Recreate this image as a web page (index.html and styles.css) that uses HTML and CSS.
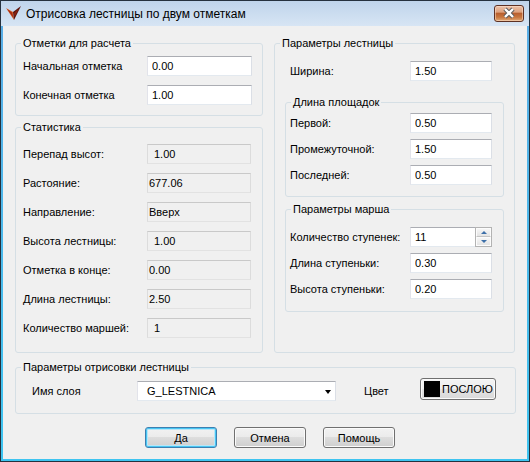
FILE: index.html
```html
<!DOCTYPE html>
<html>
    <head>
        <meta charset="utf-8">
        <link rel="stylesheet" href="styles.css">
    </head>
    <body>
        <div class="window">
            <div class="titlebar">
                <svg class="app-icon" viewBox="0 0 16 16">
                    <polygon points="0,2 7,6 8,14" fill="#d8602a"/>
                    <polygon points="1,3 6,6.5 7.5,12" fill="#a32a12"/>
                    <polygon points="7,6 15,0 8,14" fill="#5a140c"/>
                    <polygon points="8,7 13,2.5 8.5,11" fill="#8a2212"/>
                </svg>
                <span class="title">Отрисовка лестницы по двум отметкам</span>
                <div class="close-btn">
                    <svg viewBox="0 0 30 17" width="30" height="17">
                        <path d="M11 4 L19 12 M19 4 L11 12" stroke="#5a5a5a" stroke-width="4.4"/>
                        <path d="M11 4 L19 12 M19 4 L11 12" stroke="#fff" stroke-width="2.4"/>
                    </svg>
                </div>
            </div>

            <div class="client">
                <div class="top">
                    <div class="col-left">
                        <fieldset class="group g-marks">
                            <legend>Отметки для расчета</legend>
                            <div class="row">
                                <label class="lbl-left">Начальная отметка</label>
                                <input class="edit w-left" type="text" value="0.00">
                            </div>
                            <div class="row">
                                <label class="lbl-left">Конечная отметка</label>
                                <input class="edit w-left" type="text" value="1.00">
                            </div>
                        </fieldset>

                        <fieldset class="group g-stats">
                            <legend>Статистика</legend>
                            <div class="row">
                                <label class="lbl-left">Перепад высот:</label>
                                <div class="static shift">1.00</div>
                            </div>
                            <div class="row">
                                <label class="lbl-left">Растояние:</label>
                                <div class="static">677.06</div>
                            </div>
                            <div class="row">
                                <label class="lbl-left">Направление:</label>
                                <div class="static">Вверх</div>
                            </div>
                            <div class="row">
                                <label class="lbl-left">Высота лестницы:</label>
                                <div class="static shift">1.00</div>
                            </div>
                            <div class="row">
                                <label class="lbl-left">Отметка в конце:</label>
                                <div class="static">0.00</div>
                            </div>
                            <div class="row">
                                <label class="lbl-left">Длина лестницы:</label>
                                <div class="static">2.50</div>
                            </div>
                            <div class="row">
                                <label class="lbl-left">Количество маршей:</label>
                                <div class="static shift">1</div>
                            </div>
                        </fieldset>
                    </div>

                    <fieldset class="group g-params">
                        <legend>Параметры лестницы</legend>
                        <div class="row width-row">
                            <label class="lbl-right">Ширина:</label>
                            <input class="edit w-right" type="text" value="1.50">
                        </div>

                        <fieldset class="group sub g-pads">
                            <legend>Длина площадок</legend>
                            <div class="row">
                                <label class="lbl-right">Первой:</label>
                                <input class="edit w-right" type="text" value="0.50">
                            </div>
                            <div class="row">
                                <label class="lbl-right">Промежуточной:</label>
                                <input class="edit w-right" type="text" value="1.50">
                            </div>
                            <div class="row">
                                <label class="lbl-right">Последней:</label>
                                <input class="edit w-right" type="text" value="0.50">
                            </div>
                        </fieldset>

                        <fieldset class="group sub g-march">
                            <legend>Параметры марша</legend>
                            <div class="row">
                                <label class="lbl-right">Количество ступенек:</label>
                                <div class="edit w-right spin">
                                    <input class="bare" type="text" value="11">
                                    <div class="spin-btns">
                                        <span class="spin-up"><i></i></span>
                                        <span class="spin-down"><i></i></span>
                                    </div>
                                </div>
                            </div>
                            <div class="row">
                                <label class="lbl-right">Длина ступеньки:</label>
                                <input class="edit w-right" type="text" value="0.30">
                            </div>
                            <div class="row">
                                <label class="lbl-right">Высота ступеньки:</label>
                                <input class="edit w-right" type="text" value="0.20">
                            </div>
                        </fieldset>
                    </fieldset>
                </div>

                <fieldset class="group g-draw">
                    <legend>Параметры отрисовки лестницы</legend>
                    <div class="row">
                        <label class="lbl-layer">Имя слоя</label>
                        <div class="combo">
                            <span>G_LESTNICA</span>
                            <i class="combo-arrow"></i>
                        </div>
                        <label class="lbl-color">Цвет</label>
                        <button class="btn color-btn"><i class="swatch"></i>ПОСЛОЮ</button>
                    </div>
                </fieldset>

                <div class="buttons">
                    <button class="btn default">Да</button>
                    <button class="btn">Отмена</button>
                    <button class="btn">Помощь</button>
                </div>
            </div>
        </div>
    </body>
</html>
```

FILE: styles.css
```css
* {
    box-sizing: border-box;
}

body {
    margin: 0;
    font-family: "Liberation Sans", Arial, sans-serif;
    font-size: 11px;
    color: #000;
}

/* рамка окна */
.window {
    width: 530px;
    height: 462px;
    border: 1px solid #25313e;
    padding: 0 2px 2px;
    background: linear-gradient(#bfd4eb, #d7e5f4 25px, #5aaee6 25px, #3ec4f0);
    display: flex;
    flex-direction: column;
}

.titlebar {
    flex: none;
    height: 25px;
    display: flex;
    align-items: center;
}

.app-icon {
    width: 16px;
    height: 16px;
    margin-left: 3px;
    margin-right: 4px;
}

.title {
    flex: 1;
    font-size: 12px;
    color: #000;
}

.close-btn {
    width: 30px;
    height: 17px;
    margin-right: 3px;
    border: 1px solid #5e3124;
    border-radius: 3px;
    background: linear-gradient(#ecc2aa 0%, #dea27e 40%, #b9602f 50%, #c8773f 75%, #e2aa78 100%);
    box-shadow: inset 0 0 0 1px rgba(255, 230, 210, 0.5);
    overflow: hidden;
}

.close-btn svg {
    display: block;
    margin: -1px 0 0 -1px;
}

/* клиентская часть */
.client {
    flex: 1;
    background-color: #f0f0f0;
    padding: 11px 11px 0 12px;
}

.top {
    display: flex;
    gap: 11px;
}

.col-left {
    width: 248px;
}

.group {
    margin: 0;
    min-width: 0;
    border: 1px solid #d5dfe5;
    border-radius: 3px;
}

.group legend {
    padding: 0 2px;
    margin-left: -2px;
    line-height: 13px;
}

.row {
    display: flex;
    align-items: center;
    height: 20px;
}

.g-marks {
    padding: 6px 10px 10px 7px;
}
.g-marks .row + .row {
    margin-top: 9px;
}

.g-stats {
    margin-top: 5px;
    padding: 10px 10px 14px 7px;
}
.g-stats .row + .row {
    margin-top: 9px;
}

.lbl-left {
    width: 124px;
}

.w-left {
    width: 105px;
}

.g-params {
    width: 241px;
    padding: 11px 10px 0 10px;
}
.g-params > legend {
    margin-left: -5px;
}

.width-row {
    margin-left: 5px;
}

.sub legend {
    margin-left: 1px;
}

.g-pads {
    margin-top: 15px;
    padding: 4px 10px 11px 4px;
}
.g-pads .row + .row {
    margin-top: 6px;
}

.g-march {
    margin-top: 6px;
    padding: 11px 10px 12px 4px;
}
.g-march .row + .row {
    margin-top: 6px;
}

.lbl-right {
    width: 120px;
}

.w-right {
    width: 82px;
}

/* поля ввода */
.edit {
    height: 20px;
    border: 1px solid;
    border-color: #abadb3 #dbdfe6 #e3e9ef #e2e3ea;
    background-color: #fff;
    font: inherit;
    color: #000;
    padding: 0 4px;
    outline: none;
}

.static {
    width: 104px;
    height: 20px;
    line-height: 18px;
    border: 1px solid;
    border-color: #c9c9c9 #dcdcdc #e2e2e2 #dcdcdc;
    background-color: #f0f0f0;
    padding-left: 1px;
}

.static.shift {
    padding-left: 6px;
}

.spin {
    display: flex;
    padding-right: 0;
}

.bare {
    flex: 1;
    width: 10px;
    border: none;
    padding: 0;
    font: inherit;
    outline: none;
    background: transparent;
}

.spin-btns {
    width: 17px;
    margin: -1px -1px -1px 0;
    border: 1px solid #b3b3b3;
    display: flex;
    flex-direction: column;
}

.spin-btns span {
    flex: 1;
    display: flex;
    align-items: center;
    justify-content: center;
    background: linear-gradient(#f6f6f6, #e4e4e4);
    border: 1px solid #fcfcfc;
}

.spin-up {
    border-bottom-color: #c4c4c4 !important;
}

.spin-up i {
    border-left: 3px solid transparent;
    border-right: 3px solid transparent;
    border-bottom: 3px solid #3d6fa8;
}

.spin-down i {
    border-left: 3px solid transparent;
    border-right: 3px solid transparent;
    border-top: 3px solid #3d6fa8;
}

/* нижняя группа */
.g-draw {
    margin-top: 8px;
    padding: 7px 10px 12px 7px;
}

.lbl-layer {
    margin-left: 9px;
    width: 105px;
}

.combo {
    width: 199px;
    height: 20px;
    border: 1px solid;
    border-color: #abadb3 #dbdfe6 #e3e9ef #e2e3ea;
    background-color: #fff;
    display: flex;
    align-items: center;
    padding: 0 4px 0 9px;
}

.combo span {
    flex: 1;
}

.combo-arrow {
    border-left: 3.5px solid transparent;
    border-right: 3.5px solid transparent;
    border-top: 4px solid #000;
    margin-top: 1px;
}

.lbl-color {
    margin-left: 28px;
    width: 56px;
}

/* кнопки */
.btn {
    font: inherit;
    color: #000;
    height: 21px;
    width: 72px;
    padding: 0;
    border: 1px solid #707070;
    border-radius: 3px;
    background: linear-gradient(#f2f2f2 0%, #ebebeb 49%, #dddddd 50%, #cfcfcf 100%);
    box-shadow: inset 0 0 0 1px #fbfbfb;
}

.btn.default {
    border-color: #3c7fb1;
    box-shadow: inset 0 0 0 1px #48c6f3, inset 0 0 0 2px #b8e6f8;
}

.color-btn {
    width: 76px;
    height: 22px;
    margin-top: -4px;
    display: flex;
    align-items: center;
    padding-left: 3px;
    background: linear-gradient(#f4f4f4 0%, #eeeeee 49%, #e3e3e3 50%, #d9d9d9 100%);
}

.swatch {
    width: 16px;
    height: 16px;
    background-color: #000;
    margin-right: 2px;
}

.buttons {
    margin-top: 13px;
    padding-left: 130px;
    display: flex;
    gap: 17px;
}
```
